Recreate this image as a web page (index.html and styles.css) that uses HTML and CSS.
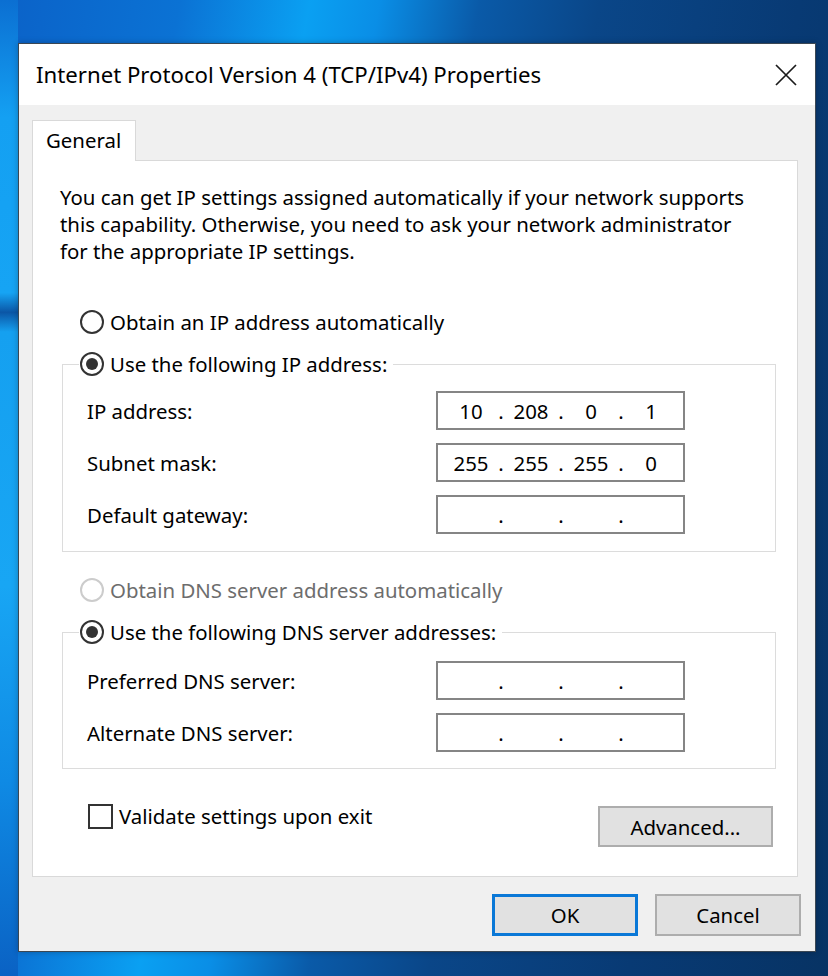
FILE: index.html
```html
<!DOCTYPE html>
<html lang="en">
<head>
<meta charset="utf-8">
<title>Internet Protocol Version 4 (TCP/IPv4) Properties</title>
<link rel="stylesheet" href="styles.css">
</head>
<body>
<div class="window">
  <div class="titlebar">
    <span class="title">Internet Protocol Version 4 (TCP/IPv4) Properties</span>
    <span class="close" aria-label="Close">
      <svg width="22" height="22" viewBox="0 0 22 22"><path d="M1 1 L21 21 M21 1 L1 21" stroke="#1b1b1b" stroke-width="1.7" fill="none"/></svg>
    </span>
  </div>
  <div class="client">
    <div class="tabs"><div class="tab">General</div></div>
    <div class="panel">
      <p class="intro">You can get IP settings assigned automatically if your network supports<br>this capability. Otherwise, you need to ask your network administrator<br>for the appropriate IP settings.</p>

      <div class="radio-row"><span class="radio"></span><span>Obtain an IP address automatically</span></div>
      <fieldset class="group group-ip">
        <legend class="radio-row legend"><span class="radio checked"></span><span>Use the following IP address:</span></legend>
        <div class="field-row">
          <span class="label">IP address:</span>
          <div class="ipbox"><span class="seg">10</span><span class="dot">.</span><span class="seg">208</span><span class="dot">.</span><span class="seg">0</span><span class="dot">.</span><span class="seg">1</span></div>
        </div>
        <div class="field-row">
          <span class="label">Subnet mask:</span>
          <div class="ipbox"><span class="seg">255</span><span class="dot">.</span><span class="seg">255</span><span class="dot">.</span><span class="seg">255</span><span class="dot">.</span><span class="seg">0</span></div>
        </div>
        <div class="field-row">
          <span class="label">Default gateway:</span>
          <div class="ipbox"><span class="seg"></span><span class="dot">.</span><span class="seg"></span><span class="dot">.</span><span class="seg"></span><span class="dot">.</span><span class="seg"></span></div>
        </div>
      </fieldset>

      <div class="radio-row disabled dns-first"><span class="radio"></span><span>Obtain DNS server address automatically</span></div>
      <fieldset class="group group-dns">
        <legend class="radio-row legend"><span class="radio checked"></span><span>Use the following DNS server addresses:</span></legend>
        <div class="field-row">
          <span class="label">Preferred DNS server:</span>
          <div class="ipbox"><span class="seg"></span><span class="dot">.</span><span class="seg"></span><span class="dot">.</span><span class="seg"></span><span class="dot">.</span><span class="seg"></span></div>
        </div>
        <div class="field-row">
          <span class="label">Alternate DNS server:</span>
          <div class="ipbox"><span class="seg"></span><span class="dot">.</span><span class="seg"></span><span class="dot">.</span><span class="seg"></span><span class="dot">.</span><span class="seg"></span></div>
        </div>
      </fieldset>

      <div class="bottom-row">
        <label class="check"><span class="box"></span><span>Validate settings upon exit</span></label>
        <button class="btn adv" type="button">Advanced...</button>
      </div>
    </div>
    <div class="actions">
      <button class="btn ok" type="button">OK</button>
      <button class="btn" type="button">Cancel</button>
    </div>
  </div>
</div>
</body>
</html>
```
FILE: styles.css
```css
html, body {
  margin: 0;
  height: 100%;
}

body {
  box-sizing: border-box;
  padding: 43px 0 0 18px;
  font-family: "Noto Sans", "Open Sans", sans-serif;
  font-size: 20.4px;
  color: #000;
  background:
    linear-gradient(180deg, #0b6fd2 0%, #14a0f2 12%, #16a4f4 30%, #0b56a6 32%, #15a0f0 34%, #18a6f4 60%, #0f8ae4 80%, #0a62c4 100%) left top / 18px 100% no-repeat,
    linear-gradient(100deg, #0b62c8 0%, #0b72d4 18%, #0aa0f2 31%, #0a8ee6 38%, #0a5aa8 48%, #0a4688 60%, #083a74 80%, #073364 100%);
}

.window {
  width: 798px;
  height: 909px;
  box-sizing: border-box;
  border: 1px solid #3b4753;
  background: #f0f0f0;
  display: flex;
  flex-direction: column;
  box-shadow: 0 0 6px rgba(0, 0, 0, 0.25);
}

.titlebar {
  height: 61px;
  flex: none;
  background: #fff;
  display: flex;
  align-items: center;
  justify-content: space-between;
  padding: 0 18px 0 17px;
}

.title {
  font-size: 22.2px;
  color: #000;
}

.close {
  display: flex;
  width: 22px;
  height: 22px;
}

.client {
  flex: 1;
  padding: 15px 17px 0 13px;
}

.tabs {
  display: flex;
}

.tab {
  position: relative;
  z-index: 1;
  width: 104px;
  height: 41px;
  box-sizing: border-box;
  margin-bottom: -1px;
  padding-left: 13px;
  border: 1px solid #d9d9d9;
  border-bottom: none;
  background: #fff;
  line-height: 38px;
}

.panel {
  height: 717px;
  box-sizing: border-box;
  border: 1px solid #d9d9d9;
  background: #fff;
  padding: 0 22px 0 27px;
  display: flex;
  flex-direction: column;
}

.intro {
  margin: 23px 0 0;
  line-height: 27px;
  white-space: nowrap;
}

.radio-row {
  display: flex;
  align-items: center;
  height: 28px;
  margin: 43px 0 0 20px;
  white-space: nowrap;
}

.radio {
  width: 24px;
  height: 24px;
  box-sizing: border-box;
  border: 2px solid #333;
  border-radius: 50%;
  margin-right: 6px;
  display: flex;
  align-items: center;
  justify-content: center;
  flex: none;
}

.radio.checked::after {
  content: "";
  width: 12px;
  height: 12px;
  border-radius: 50%;
  background: #333;
}

.disabled {
  color: #6d6d6d;
}

.disabled .radio {
  border-color: #cccccc;
}

.dns-first {
  margin-top: 24px;
}

.group {
  margin: 14px -1px 0 2px;
  border: 1px solid #dcdcdc;
  min-width: 0;
  display: flex;
  flex-direction: column;
  gap: 13px;
}

.group-ip {
  padding: 13px 0 17px 24px;
}

.group-dns {
  padding: 15px 0 16px 24px;
}

.legend {
  margin: 0 0 0 -8px;
  padding: 0 6px 0 1px;
  height: 28px;
}

.field-row {
  display: grid;
  grid-template-columns: 349px 249px;
  align-items: center;
  height: 39px;
}

.ipbox {
  display: flex;
  align-items: center;
  height: 39px;
  box-sizing: border-box;
  border: 2px solid #858585;
  padding: 0 7px 0 8px;
}

.seg {
  width: 50px;
  text-align: center;
}

.dot {
  width: 10px;
  text-align: center;
}

.bottom-row {
  display: flex;
  justify-content: space-between;
  align-items: flex-start;
  margin: 33px 2px 0 28px;
}

.check {
  display: flex;
  align-items: center;
  height: 28px;
}

.box {
  width: 25px;
  height: 25px;
  box-sizing: border-box;
  border: 2px solid #333;
  margin-right: 6px;
}

.btn {
  font-family: inherit;
  font-size: 20.4px;
  color: #000;
  background: #e1e1e1;
  border: 2px solid #adadad;
  padding: 0;
}

.adv {
  width: 175px;
  height: 41px;
  margin-top: 4px;
}

.actions {
  display: flex;
  justify-content: flex-end;
  gap: 17px;
  margin-right: -3px;
  padding-top: 17px;
}

.actions .btn {
  width: 146px;
  height: 42px;
}

.btn.ok {
  border: 3px solid #0a78d7;
}
```
